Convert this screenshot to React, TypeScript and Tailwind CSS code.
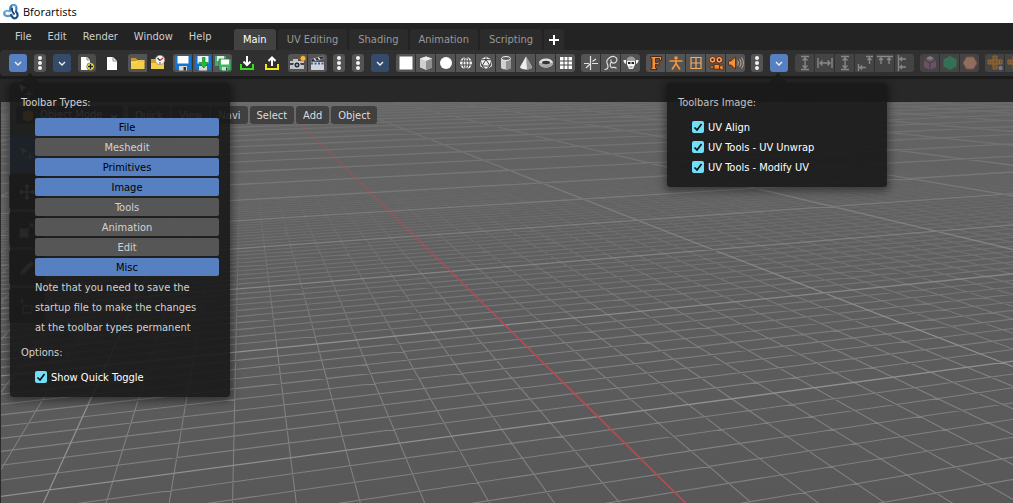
import { useState } from 'react'
import type { ReactNode } from 'react'

function Icon({ children, dim = false }: { children: ReactNode; dim?: boolean }): React.JSX.Element {
  return (
    <svg
      viewBox="0 0 16 16"
      fill="none"
      aria-hidden="true"
      className={dim ? 'size-4 shrink-0 opacity-40' : 'size-4 shrink-0'}
    >
      {children}
    </svg>
  )
}

const chevron = <path d="M5 7l3 3 3-3" stroke="#f0f0f0" strokeWidth="1.4" />

const dots = (
  <g fill="#f2f2f2">
    <circle cx="8" cy="3" r="2" />
    <circle cx="8" cy="8" r="2" />
    <circle cx="8" cy="13" r="2" />
  </g>
)

const newFile = (
  <>
    <path d="M2 2h6l3 3v10H2z" fill="#fff" />
    <path d="M8 2v3h3" stroke="#888" />
    <circle cx="11.5" cy="11.5" r="3.8" fill="#f0e44c" stroke="#554e00" strokeWidth=".6" />
    <path d="M11.500 9v5M9 11.500h5" stroke="#222" strokeWidth="1.3" />
  </>
)

const page = (
  <>
    <path d="M3 2h6l4 4v9H3z" fill="#fff" />
    <path d="M9 2v4h4" stroke="#8a8a8a" />
  </>
)

const folder = (
  <>
    <path d="M1 3h5l1.500 2H14.500v3H1z" fill="#c9971c" />
    <path d="M1 7h13.500v7H1z" fill="#f5cf4a" />
    <path d="M1 7h5l1-1h7.500" stroke="#fff0a8" />
  </>
)

const history = (
  <>
    <path d="M1 4h5l1.500 1H14v9H1z" fill="#d9a41e" />
    <path d="M1 8h13v6H1z" fill="#f5cf4a" />
    <circle cx="10" cy="5" r="4.700" fill="#f4f4f4" stroke="#888" strokeWidth=".7" />
    <path d="M7.500 3L10 5.500" stroke="#333" strokeWidth="1.300" />
    <path d="M10 5.500l3-2.500" stroke="#c82a2a" strokeWidth="1.300" />
    <path d="M9 8h2" stroke="#555" />
  </>
)

const save = (
  <>
    <path d="M0 1h16v14H2L0 13z" fill="#1473cf" />
    <path d="M2.500 1h11v7.500h-11z" fill="#fff" />
    <path d="M4 11h8v4.500H4z" fill="#d8d8d8" />
    <path d="M8.500 12h2.500v3.500H8.500z" fill="#333" />
  </>
)

const saveAs = (
  <>
    <path d="M0 1h16v14H2L0 13z" fill="#1473cf" />
    <path d="M2.500 1h11v7.500h-11z" fill="#e8f2fb" />
    <path d="M4 11h8v4.500H4z" fill="#d8d8d8" />
    <path d="M7.500 2.500h2.500v5h3.500L8.800 13 4 7.500h3.500z" fill="#16c52b" stroke="#08721a" strokeWidth=".6" />
  </>
)

const saveCopy = (
  <>
    <path d="M0 1h11v10H0z" fill="#4aa869" />
    <path d="M2 1h7v5H2z" fill="#dff3e5" />
    <path d="M4 4h12v11.500H5L4 14z" fill="#3fb765" stroke="#1f6a39" strokeWidth=".6" />
    <path d="M6 4.500h8v5H6z" fill="#fff" />
    <path d="M7 12h6v3.500H7z" fill="#d8d8d8" />
    <path d="M11 12.500h1.500v3H11z" fill="#333" />
  </>
)

const importIcon = (
  <>
    <path d="M8 1v8M4.500 6.500L8 10l3.500-3.500" stroke="#fff" strokeWidth="2" />
    <path d="M2 9v5h12V9" stroke="#36e01c" strokeWidth="2" />
  </>
)

const exportIcon = (
  <>
    <path d="M8 11V3M4.500 6L8 2.500 11.500 6" stroke="#fff" strokeWidth="2" />
    <path d="M2 9v5h12V9" stroke="#f1e51b" strokeWidth="2" />
  </>
)

const camera = (
  <>
    <path d="M0 6h3V4h5v2h6v8H0z" fill="#c4c4c4" />
    <path d="M0 9h14" stroke="#444" strokeWidth="2" />
    <circle cx="7" cy="10" r="3.200" fill="#222" stroke="#eee" />
    <circle cx="7" cy="10" r="1.300" fill="#6ea0cc" />
    <path d="M13 0v7M9.500 3.500h7M10.500 1l5 5M15.500 1l-5 5" stroke="#c47a1c" strokeWidth=".8" />
    <circle cx="13" cy="3.500" r="2.400" fill="#ffb53c" />
  </>
)

const clapper = (
  <>
    <path d="M1 7h13v8H1z" fill="#d0d4da" />
    <path d="M1 4.500L13 1l1 2.500L1.500 7z" fill="#262626" stroke="#9aa0a8" strokeWidth=".6" />
    <path d="M4 3.500l2 2M8 2.500l2 2" stroke="#e8e8e8" strokeWidth="1.200" />
    <path d="M1 8.500h13" stroke="#3d5f96" strokeWidth="2" strokeDasharray="2 1.500" />
  </>
)

const plane = <path d="M1.500 1.500h13v13h-13z" fill="#fff" />

const cube = (
  <>
    <path d="M8 1.500l6 2v9l-6 2.500-6-2.500v-9z" fill="#cfcfcf" />
    <path d="M8 1.500l6 2-6 2.500-6-2.500z" fill="#ececec" />
    <path d="M8 6l6-2.500v9L8 15z" fill="#8f8f8f" />
  </>
)

const circle = <circle cx="8" cy="8" r="6" fill="#fff" />

const uvSphere = (
  <>
    <circle cx="8" cy="8" r="6" fill="#f4f4f4" />
    <path d="M2 6h12M2 10h12M8 2v12" stroke="#444" />
    <ellipse cx="8" cy="8" rx="3" ry="6" stroke="#444" />
  </>
)

const icoSphere = (
  <>
    <path d="M8 1.500l5.800 3.300v6.400L8 14.500l-5.800-3.300V4.800z" fill="#f0f0f0" />
    <path d="M8 4.500L4 11h8zM8 1.500v3M2.200 4.800L8 4.500l5.800.3M4 11L2.200 4.800M12 11l1.800-6.200M4 11l4 3.500L12 11" stroke="#444" />
  </>
)

const cylinder = (
  <>
    <path d="M3 3.500v9c0 1 2 2 5 2s5-1 5-2v-9z" fill="#d0d0d0" />
    <path d="M8 4v10.500c3 0 5-1 5-2v-9z" fill="#939393" />
    <ellipse cx="8" cy="3.500" rx="4.500" ry="2" fill="#5d5d5d" stroke="#f2f2f2" />
  </>
)

const cone = (
  <>
    <path d="M8 1.500L2 12c0 1.500 3 2.500 6 2.500s6-1 6-2.500z" fill="#eee" />
    <path d="M8 1.500L14 12c0 1.500-3 2.500-5 2.500z" fill="#999" />
  </>
)

const torus = (
  <>
    <ellipse cx="8" cy="8" rx="7" ry="4.600" fill="#e0e0e0" />
    <path d="M1 8c0 2.500 3 4.600 7 4.600S15 10.500 15 8z" fill="#a8a8a8" />
    <ellipse cx="8" cy="7.500" rx="4" ry="1.700" fill="#333" />
  </>
)

const gridIcon = (
  <>
    <path d="M2 2h12v12H2z" fill="#fff" />
    <path d="M6 2v12M10 2v12M2 6h12M2 10h12" stroke="#444" />
  </>
)

const empty = (
  <path d="M7.500 1v14M1 8.500h5M9 8.500h6M9.500 6.500L13 4M3 13l4-4" stroke="#e2e2e2" strokeWidth="1.200" />
)

const curve = (
  <path
    d="M1.500 14.500c2 0 3.500-1 3.500-3 0-2.500-2-4-1-6s4-4.500 7-4 4 4.500 1.500 6S7 7 8 4.500M8.500 7c-2 2-1.500 5 0 5.500s3-1.500 5 1"
    stroke="#dedede"
    strokeWidth="1.200"
  />
)

const monkey = (
  <>
    <path d="M3.500 6C3.500 3 5.500 1.500 8 1.500S12.500 3 12.500 6z" fill="#9c9c9c" />
    <path d="M4 6h8v3.500l-2 4.500H6L4 9.500z" fill="#f4f4f4" />
    <path d="M.500 5L3 5v4C1.500 8.500.500 7 .500 5zM15.500 5L13 5v4c1.500-.5 2.500-2 2.500-4z" fill="#f4f4f4" />
    <path d="M5 7h2.500v2H5zM8.500 7H11v2H8.500z" fill="#222" />
    <path d="M6.500 12h3" stroke="#666" />
  </>
)

const fontIcon = (
  <path
    d="M2.500 1.500h11v4h-1.500l-.500-2H7.500v4h2l.5-1h1v4h-1l-.5-1.200h-2v3.500l1.500.700v1H2.500v-1l1.500-.700V3.500l-1.500-.5z"
    fill="#f5913a"
    stroke="#3a1605"
    strokeWidth=".8"
  />
)

const armature = (
  <>
    <circle cx="8" cy="3" r="1.800" fill="#f5953d" />
    <path d="M1.500 6h13M8 5v4.500M8 8.500L4 14.500M8 8.500l4 6" stroke="#f5953d" strokeWidth="1.700" />
  </>
)

const lattice = (
  <path d="M3 2.500h10v11H3zM8 2.500v11M3 8h10" stroke="#f3a865" strokeWidth="1.200" />
)

const movie = (
  <>
    <path d="M6 9.500h5.500V14H6zM11.500 11.500l3.500-2v6l-3.500-2zM2 11h4v2H2z" fill="#f08a32" stroke="#3a1605" strokeWidth=".6" />
    <circle cx="4.500" cy="4.800" r="3.300" fill="#f5a55d" stroke="#6a2c10" />
    <circle cx="11.200" cy="4.800" r="3.300" fill="#f5a55d" stroke="#6a2c10" />
    <circle cx="4.500" cy="4.800" r="1.200" fill="#54200a" />
    <circle cx="11.200" cy="4.800" r="1.200" fill="#54200a" />
  </>
)

const speaker = (
  <>
    <path d="M.500 6h2.500L7.500 2v12L3 10H.500z" fill="#f5913a" stroke="#54200a" strokeWidth=".8" />
    <path d="M9.500 5.500c1 1.500 1 3.500 0 5M11.500 4c2 2.500 2 5.500 0 8M13.500 2.500c2.500 3.500 2.500 7.500 0 11" stroke="#c9a98a" />
  </>
)

const straightenY = <path d="M4 1.500h8M4 14.500h8M8 3v10M5.500 5.500L8 3l2.500 2.500M5.500 10.500L8 13l2.500-2.500" stroke="#eee" strokeWidth="1.400" />
const straightenX = <path d="M1 3v10M15 3v10M3 8h10M5.500 5.500L3 8l2.500 2.500M10.500 5.500L13 8l-2.500 2.500" stroke="#eee" strokeWidth="1.400" />
const alignAuto = <path d="M9 1.500h7M12.500 9V3M10.500 5l2-2 2 2M1.500 9v7M9 12.500H3M5 10.500l-2 2 2 2" stroke="#eee" strokeWidth="1.400" />
const alignTop = <path d="M0 1.500h16M4 9V3M2 5l2-2 2 2M12 9V3M10 5l2-2 2 2" stroke="#eee" strokeWidth="1.400" />
const alignLeft = <path d="M1.500 0v16M9 4H3M5 2L3 4l2 2M9 12H3M5 10l-2 2 2 2" stroke="#eee" strokeWidth="1.400" />

const unwrapBox = (
  <>
    <path d="M2 5l6-3 6 3v7l-6 3-6-3z" fill="#a8689a" />
    <path d="M2 5l6 3 6-3M8 8v7" stroke="#333" />
    <path d="M8 1l4 2-4 2-4-2z" fill="#ddd" />
  </>
)

const unwrapGreen = <path d="M8 1l6.500 3.500v7L8 15l-6.500-3.500v-7z" fill="#22b573" />
const unwrapHex = <path d="M4.500 2h7L15 8l-3.500 6h-7L1 8z" fill="#ffb08a" stroke="#e05a4a" />

const unfold = (
  <>
    <path d="M6 1h4v4h5v4h-5v5H6V9H1V5h5z" fill="#b56f10" stroke="#ff9d20" />
    <path d="M6 5h4v4H6zM3.500 5v4M12.500 5v4" stroke="#ff9d20" />
    <circle cx="13.500" cy="13" r="2.200" fill="#b7c8ee" />
  </>
)

function ToolButton({ label, children, plain = false }: { label: string; children: ReactNode; plain?: boolean }): React.JSX.Element {
  return (
    <button
      aria-label={label}
      className={`flex h-[18px] w-[18px] shrink-0 items-center justify-center rounded-[3px] ${plain ? '' : 'bg-[#4c4c4c]'}`}
    >
      <Icon>{children}</Icon>
    </button>
  )
}

function Dots({ label }: { label: string }): React.JSX.Element {
  return (
    <button
      aria-label={label}
      className="flex h-[18px] w-3 shrink-0 items-center justify-center rounded-[3px] bg-[#545454]"
    >
      <Icon>{dots}</Icon>
    </button>
  )
}

function Toggle({ label, open = false }: { label: string; open?: boolean }): React.JSX.Element {
  return (
    <button
      aria-label={label}
      aria-expanded={open}
      className={`flex h-[18px] w-[18px] shrink-0 items-center justify-center rounded-[3px] ${open ? 'bg-[#5680c2]' : 'bg-[#344b6c]'}`}
    >
      <Icon>{chevron}</Icon>
    </button>
  )
}

type Tool = [label: string, icon: ReactNode, plain?: boolean]

function cellColor(dim: boolean, plain?: boolean): string {
  if (plain) return ''
  return dim ? 'bg-[#444444]' : 'bg-[#545454]'
}

function Group({ items, dim = false }: { items: Tool[]; dim?: boolean }): React.JSX.Element {
  return (
    <div className="-mr-px flex shrink-0 gap-px overflow-hidden rounded-[3px]">
      {items.map(([label, icon, plain]) => (
        <button
          key={label}
          aria-label={label}
          disabled={dim}
          className={`flex h-[18px] w-[19px] items-center justify-center ${cellColor(dim, plain)}`}
        >
          <Icon dim={dim}>{icon}</Icon>
        </button>
      ))}
    </div>
  )
}

function Check({ label }: { label: string }): React.JSX.Element {
  const [checked, setChecked] = useState(true)
  return (
    <label className="flex h-5 items-center gap-1 text-white">
      <span className="relative flex size-3">
        <input
          type="checkbox"
          checked={checked}
          onChange={() => setChecked(!checked)}
          className="size-3 appearance-none rounded-[2px] bg-[#545454] checked:bg-[#72dff8]"
        />
        {checked && (
          <svg viewBox="0 0 12 12" fill="none" aria-hidden="true" className="pointer-events-none absolute inset-0">
            <path d="M2.500 6.500L5 9l4.500-6" stroke="#111" strokeWidth="1.700" />
          </svg>
        )}
      </span>
      <span className="pt-0.5">{label}</span>
    </label>
  )
}

function Arrow({ className }: { className: string }): React.JSX.Element {
  return (
    <svg viewBox="0 0 20 10" aria-hidden="true" className={`absolute -top-2.5 h-2.5 w-5 ${className}`}>
      <path d="M0 10L10 0l10 10z" fill="#1b1b1b" />
    </svg>
  )
}

const TYPES: [string, boolean][] = [
  ['File', true],
  ['Meshedit', false],
  ['Primitives', true],
  ['Image', true],
  ['Tools', false],
  ['Animation', false],
  ['Edit', false],
  ['Misc', true]
]

function TypesPopover(): React.JSX.Element {
  const [types, setTypes] = useState(TYPES)
  return (
    <div className="absolute left-px top-[29px] w-[220px] rounded-[3px] bg-[#181818]/90 px-[11px] py-2.5 leading-5 text-[#d2d2d2] shadow-[0_2px_8px_2px_rgba(0,0,0,0.45)]">
      <Arrow className="left-2.5" />
      <h2>Toolbar Types:</h2>
      <div className="mt-[5px] flex flex-col gap-0.5 pl-3.5">
        {types.map(([name, on]) => (
          <button
            key={name}
            aria-pressed={on}
            onClick={() => setTypes(types.map((t) => (t[0] === name ? [name, !on] : t)))}
            className={`h-[18px] rounded-[2px] pt-px text-center leading-[18px] ${on ? 'bg-[#5680c2] text-black' : 'bg-[#565656]'}`}
          >
            {name}
          </button>
        ))}
      </div>
      <p className="mt-0.5 pl-3.5">
        Note that you need to save the
        <br />
        startup file to make the changes
        <br />
        at the toolbar types permanent
      </p>
      <h2 className="mt-[5px]">Options:</h2>
      <div className="mt-1 pl-3.5">
        <Check label="Show Quick Toggle" />
      </div>
    </div>
  )
}

function ImagePopover(): React.JSX.Element {
  return (
    <div className="absolute -left-[103px] top-[29px] w-[220px] rounded-[3px] bg-[#181818]/90 px-[11px] py-2.5 leading-5 text-[#c2c2c2] shadow-[0_2px_8px_2px_rgba(0,0,0,0.45)]">
      <Arrow className="left-[101px]" />
      <h2>Toolbars Image:</h2>
      <div className="mt-1 pl-3.5">
        <Check label="UV Align" />
        <Check label="UV Tools - UV Unwrap" />
        <Check label="UV Tools - Modify UV" />
      </div>
    </div>
  )
}

// ground plane -> view, u counts lines across and v counts lines away from the camera
function project(u: number, v: number): { x: number; y: number } {
  const w = 1 + 0.0151 * u + 0.0354 * v
  return {
    x: (597 + 55.6 * u + 8.53 * v) / w,
    y: (416.7 + 0.0664 * u + 2.336 * v) / w - 102
  }
}

const NEAR = 0.3
const FAR = 1500

function gridLine(fixed: 'u' | 'v', n: number): string {
  const start =
    fixed === 'u'
      ? Math.max(-20, (NEAR - 1 - 0.0151 * n) / 0.0354)
      : Math.max(-45, (NEAR - 1 - 0.0354 * n) / 0.0151)
  const a = fixed === 'u' ? project(n, start) : project(start, n)
  const b = fixed === 'u' ? project(n, FAR) : project(FAR, n)
  return `M${a.x.toFixed(1)} ${a.y.toFixed(1)}L${b.x.toFixed(1)} ${b.y.toFixed(1)}`
}

function range(from: number, to: number, step: number): number[] {
  const out: number[] = []
  for (let n = from; n <= to; n += step) out.push(n)
  return out
}

const MINOR = [
  ...range(-60, 100, 1).filter((n) => n % 10).map((n) => gridLine('u', n)),
  ...range(-16, 75, 1).filter((n) => n % 10).map((n) => gridLine('v', n))
].join('')

const MAJOR = [
  ...range(-200, 400, 10).filter((n) => n).map((n) => gridLine('u', n)),
  ...range(-10, 400, 10).map((n) => gridLine('v', n))
].join('')

function GroundGrid(): React.JSX.Element {
  return (
    <svg
      viewBox="0 0 1013 401"
      preserveAspectRatio="xMinYMin slice"
      fill="none"
      aria-hidden="true"
      className="absolute inset-0 h-full w-full"
    >
      <defs>
        <linearGradient id="minorFade" x1="0" y1="0" x2="0" y2="401" gradientUnits="userSpaceOnUse">
          <stop offset="0.150" stopColor="#000" />
          <stop offset="0.350" stopColor="#777" />
          <stop offset="0.650" stopColor="#fff" />
        </linearGradient>
        <linearGradient id="majorFade" x1="0" y1="0" x2="0" y2="401" gradientUnits="userSpaceOnUse">
          <stop offset="0" stopColor="#333" />
          <stop offset="0.200" stopColor="#777" />
          <stop offset="0.600" stopColor="#fff" />
        </linearGradient>
        <mask id="minorMask" maskUnits="userSpaceOnUse" x="0" y="0" width="1013" height="401">
          <rect width="1013" height="401" fill="url(#minorFade)" />
        </mask>
        <mask id="majorMask" maskUnits="userSpaceOnUse" x="0" y="0" width="1013" height="401">
          <rect width="1013" height="401" fill="url(#majorFade)" />
        </mask>
      </defs>
      <path d={MINOR} stroke="#808080" strokeWidth="1.100" mask="url(#minorMask)" />
      <path d={MAJOR} stroke="#909090" strokeWidth="1.300" mask="url(#majorMask)" />
      <path d={gridLine('u', 0)} stroke="#b94a55" strokeWidth="1.600" mask="url(#majorMask)" />
    </svg>
  )
}

const moveTool = <path d="M8 1v14M1 8h14M6 3l2-2 2 2M6 13l2 2 2-2M3 6L1 8l2 2M13 6l2 2-2 2" stroke="#ccc" strokeWidth="1.400" />
const selectTool = (
  <>
    <path d="M1 1l8 4-4 1-1 4z" fill="#ccc" />
    <path d="M11 7v8M7 11h8" stroke="#ccc" />
  </>
)
const scaleTool = <path d="M1 7h8v8H1zM9 7l5-5M10 2h4v4" fill="#aaa" stroke="#aaa" />
const pencilTool = <path d="M1 15l2-5 9-9 3 3-9 9z" fill="#aaa" />
const addTool = <path d="M3 0v6M0 3h6M4 8h9v7H4z" stroke="#aaa" />

const SHELF: Tool[] = [
  ['Select', selectTool],
  ['Move', moveTool],
  ['Scale', scaleTool],
  ['Annotate', pencilTool],
  ['Add cube', addTool]
]

function Viewport(): React.JSX.Element {
  return (
    <main className="relative flex flex-1 flex-col border-l border-[#2a2a2a] bg-linear-to-b from-[#646464] to-[#585858]">
      <GroundGrid />
      <div className="relative flex gap-0.5 pt-1 pl-[15px] whitespace-nowrap text-[#dcdcdc]">
        <button className="mr-[3px] flex h-[18px] w-[107px] items-center gap-1 rounded-[3px] bg-[#353535] pt-px pl-1">
          <Icon>
            <path d="M8 2l5 2v7l-5 3-5-3V4z" fill="#e88b2a" />
          </Icon>
          Object Mode
          <Icon>{chevron}</Icon>
        </button>
        {['Quick', 'View', 'Navi', 'Select', 'Add', 'Object'].map((name) => (
          <button key={name} className="h-[18px] rounded-[3px] bg-[#3c3c3c]/90 px-[7px] pt-px leading-[18px]">
            {name}
          </button>
        ))}
      </div>
      <div className="relative mt-3 ml-2 flex w-9 flex-col gap-[3px]">
        {SHELF.map(([name, icon], i) => (
          <button
            key={name}
            aria-label={name}
            className={`flex h-[35px] items-center justify-center rounded-[3px] ${i === 0 ? 'bg-[#4772b3]' : 'bg-[#3a3a3a]'}`}
          >
            <Icon>{icon}</Icon>
          </button>
        ))}
      </div>
    </main>
  )
}

function Logo(): React.JSX.Element {
  return (
    <svg viewBox="0 0 16 16" fill="none" aria-hidden="true" className="size-4">
      <path d="M7.500 7C6.500 3.500 8 1 10.500 1S14 3.500 13 7.500" stroke="#3f83bd" strokeWidth="2.200" />
      <path d="M8 7.500C4.500 6 1.200 7 1.200 9.500S5 13 8.500 11" stroke="#5b9bcd" strokeWidth="2.200" />
      <path d="M8 10c.500 3.500 3 5 5 4s2.500-4-.5-7" stroke="#1b4f85" strokeWidth="2.200" />
      <path d="M9 3.500C8.500 6 9.500 8.500 11.500 10.500" stroke="#16467a" strokeWidth="1.800" />
      <path d="M9.500 1.200c1.500-.5 3 .3 3.200 2M2 8c1-1 3-1 4.500-.5" stroke="#a5cbe8" strokeWidth=".9" />
    </svg>
  )
}

const TABS = ['Main', 'UV Editing', 'Shading', 'Animation', 'Scripting']

export default function App(): React.JSX.Element {
  const [tab, setTab] = useState('Main')

  return (
    <div className="flex min-h-screen flex-col overflow-hidden bg-[#1c1c1c] font-['DejaVu_Sans_Condensed','Noto_Sans',sans-serif] text-[11px]">
      <header className="flex h-[23px] shrink-0 items-center gap-1 bg-white pl-[3px] font-['Open_Sans',sans-serif] text-black">
        <Logo />
        <h1 className="pt-px">Bforartists</h1>
      </header>

      <div className="flex h-[27px] shrink-0 items-end bg-[#232323]">
        <nav className="flex h-[27px] w-[234px] shrink-0 items-center gap-4 pt-px pl-[15px] text-[#cdcdcd]">
          {['File', 'Edit', 'Render', 'Window', 'Help'].map((name) => (
            <button key={name}>{name}</button>
          ))}
        </nav>
        <div role="tablist" className="flex gap-0.5">
          {TABS.map((name) => (
            <button
              key={name}
              role="tab"
              aria-selected={tab === name}
              onClick={() => setTab(name)}
              className={`h-[21px] rounded-t-[3px] px-[9px] leading-[21px] ${tab === name ? 'bg-[#424242] text-white' : 'bg-[#2b2b2b] text-[#989898]'}`}
            >
              {name}
            </button>
          ))}
          <button aria-label="Add workspace" className="flex h-[21px] w-5 items-center justify-center rounded-t-[3px] bg-[#2b2b2b]">
            <Icon>
              <path d="M8 3v10M3 8h10" stroke="#fff" strokeWidth="2" />
            </Icon>
          </button>
        </div>
      </div>

      <div className="relative z-10 flex h-[26px] shrink-0 items-center gap-[7px] rounded-l-[4px] bg-[#303030] pl-[9px]">
        <div className="relative">
          <Toggle label="Toolbar types" open />
          <TypesPopover />
        </div>
        <Dots label="File toolbars" />
        <Toggle label="File options" />
        <ToolButton label="New">{newFile}</ToolButton>
        <ToolButton label="New empty" plain>{page}</ToolButton>
        <Group items={[['Open', folder], ['Open recent', history, true]]} />
        <Group items={[['Save', save], ['Save as', saveAs], ['Save copy', saveCopy]]} />
        <ToolButton label="Import" plain>{importIcon}</ToolButton>
        <ToolButton label="Export" plain>{exportIcon}</ToolButton>
        <Group items={[['Render image', camera], ['Render animation', clapper]]} />
        <Dots label="Meshedit toolbars" />
        <Dots label="Primitives toolbars" />
        <Toggle label="Primitives options" />
        <Group
          items={[
            ['Plane', plane],
            ['Cube', cube],
            ['Circle', circle],
            ['UV sphere', uvSphere],
            ['Ico sphere', icoSphere],
            ['Cylinder', cylinder],
            ['Cone', cone],
            ['Torus', torus],
            ['Grid', gridIcon]
          ]}
        />
        <Group items={[['Empty', empty], ['Curve', curve], ['Monkey', monkey]]} />
        <Group
          items={[
            ['Text', fontIcon],
            ['Armature', armature],
            ['Lattice', lattice],
            ['Camera', movie],
            ['Speaker', speaker]
          ]}
        />
        <Dots label="Image toolbars" />
        <div className="relative">
          <Toggle label="Image options" open />
          <ImagePopover />
        </div>
        <Group
          dim
          items={[
            ['Straighten Y', straightenY],
            ['Straighten X', straightenX],
            ['Align Y', straightenY],
            ['Align auto', alignAuto],
            ['Align top', alignTop],
            ['Align left', alignLeft]
          ]}
        />
        <Group dim items={[['Unwrap', unwrapBox], ['Project', unwrapGreen], ['Reset', unwrapHex]]} />
        <Group dim items={[['Unfold', unfold], ['Unfold all', unfold]]} />
      </div>

      <div className="mt-[3px] flex h-[23px] shrink-0 items-center bg-[#282828] pl-[18px]">
        <Icon>{selectTool}</Icon>
      </div>

      <Viewport />
    </div>
  )
}
